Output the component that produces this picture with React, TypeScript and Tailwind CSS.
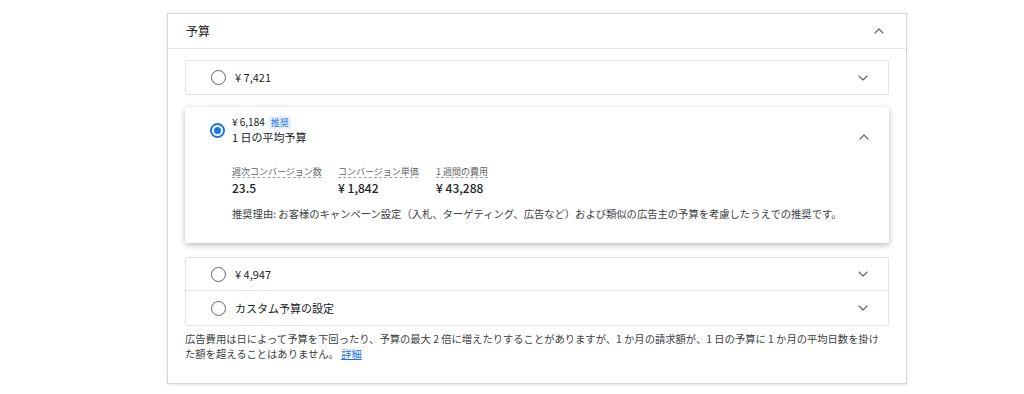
import { ChevronDown, ChevronUp } from 'lucide-react'

const font = { fontFamily: '"Noto Sans CJK JP", "Noto Sans", sans-serif' }

const Radio = ({ checked }: { checked?: boolean }) => {
  if (checked) {
    return (
      <span className="flex h-[15px] w-[15px] shrink-0 items-center justify-center rounded-full border-2 border-[#1a73e8]">
        <span className="h-[7px] w-[7px] rounded-full bg-[#1a73e8]" />
      </span>
    )
  }
  return <span className="h-[15px] w-[15px] shrink-0 rounded-full border-[1.5px] border-[#5f6368]" />
}

const Option = ({ label, className }: { label: string; className: string }) => {
  return (
    <div className={`flex items-center justify-between bg-white pl-[25px] pr-[17px] ${className}`}>
      <div className="flex items-center gap-[9px]">
        <Radio />
        <span className="text-[11px] text-[#202124]">{label}</span>
      </div>
      <ChevronDown className="h-[16px] w-[16px] text-[#5f6368]" strokeWidth={1.6} />
    </div>
  )
}

const Stat = ({ label, value }: { label: string; value: string }) => {
  return (
    <div className="flex flex-col">
      <span className="whitespace-nowrap text-[9px] leading-[14px] text-[#5f6368] underline decoration-dashed decoration-[#9aa0a6] underline-offset-2">
        {label}
      </span>
      <span className="mt-[1px] whitespace-nowrap text-[12px] font-medium leading-[16px] text-[#202124]">{value}</span>
    </div>
  )
}

export default function App() {
  return (
    <div className="min-h-screen bg-white pt-[13px] pl-[167px]" style={font}>
      <div className="w-[740px] h-[371px] border border-[#d6d6d6] bg-white shadow-[0_1px_3px_rgba(0,0,0,0.12)]">
        <div className="flex h-[35px] items-center justify-between border-b border-[#e6e6e6] pl-[18px] pr-[19px]">
          <span className="text-[12px] text-[#202124]">予算</span>
          <ChevronUp className="h-[16px] w-[16px] text-[#5f6368]" strokeWidth={1.6} />
        </div>

        <div className="px-[17px] pt-[11px]">
          <Option label="¥ 7,421" className="h-[35px] rounded-[2px] border border-[#e3e3e3]" />

          <div className="mt-[12px] h-[136px] rounded-[2px] bg-white shadow-[0_2px_6px_rgba(0,0,0,0.28)] pl-[25px] pr-[17px] pt-[8px]">
            <div className="flex items-start justify-between">
              <div className="flex items-center gap-[7px]">
                <Radio checked />
                <div className="flex flex-col">
                  <div className="flex items-center gap-[4px]">
                    <span className="text-[10px] leading-[14px] text-[#202124]">¥ 6,184</span>
                    <span className="rounded-[2px] bg-[#e8f0fe] px-[2px] text-[9px] leading-[13px] text-[#1a73e8]">推奨</span>
                  </div>
                  <span className="text-[11px] leading-[16px] text-[#202124]">1 日の平均予算</span>
                </div>
              </div>
              <ChevronUp className="mt-[14px] h-[16px] w-[16px] text-[#5f6368]" strokeWidth={1.6} />
            </div>

            <div className="mt-[20px] flex pl-[22px]">
              <div className="w-[106px]"><Stat label="週次コンバージョン数" value="23.5" /></div>
              <div className="w-[98px]"><Stat label="コンバージョン単価" value="¥ 1,842" /></div>
              <Stat label="1 週間の費用" value="¥ 43,288" />
            </div>

            <p className="mt-[10px] whitespace-nowrap pl-[22px] text-[10.3px] leading-[16px] text-[#3c4043]">
              推奨理由: お客様のキャンペーン設定（入札、ターゲティング、広告など）および類似の広告主の予算を考慮したうえでの推奨です。
            </p>
          </div>

          <div className="mt-[14px] rounded-[2px] border border-[#e3e3e3]">
            <Option label="¥ 4,947" className="h-[33px] border-b border-[#e3e3e3]" />
            <Option label="カスタム予算の設定" className="h-[34px]" />
          </div>

          <div className="mt-[5px] text-[10.3px] leading-[15px] text-[#3c4043]">
            <p className="whitespace-nowrap">
              広告費用は日によって予算を下回ったり、予算の最大 2 倍に増えたりすることがありますが、1 か月の請求額が、1 日の予算に 1 か月の平均日数を掛け
            </p>
            <p className="whitespace-nowrap">
              た額を超えることはありません。 <a className="text-[#1a73e8] underline">詳細</a>
            </p>
          </div>
        </div>
      </div>
    </div>
  )
}
